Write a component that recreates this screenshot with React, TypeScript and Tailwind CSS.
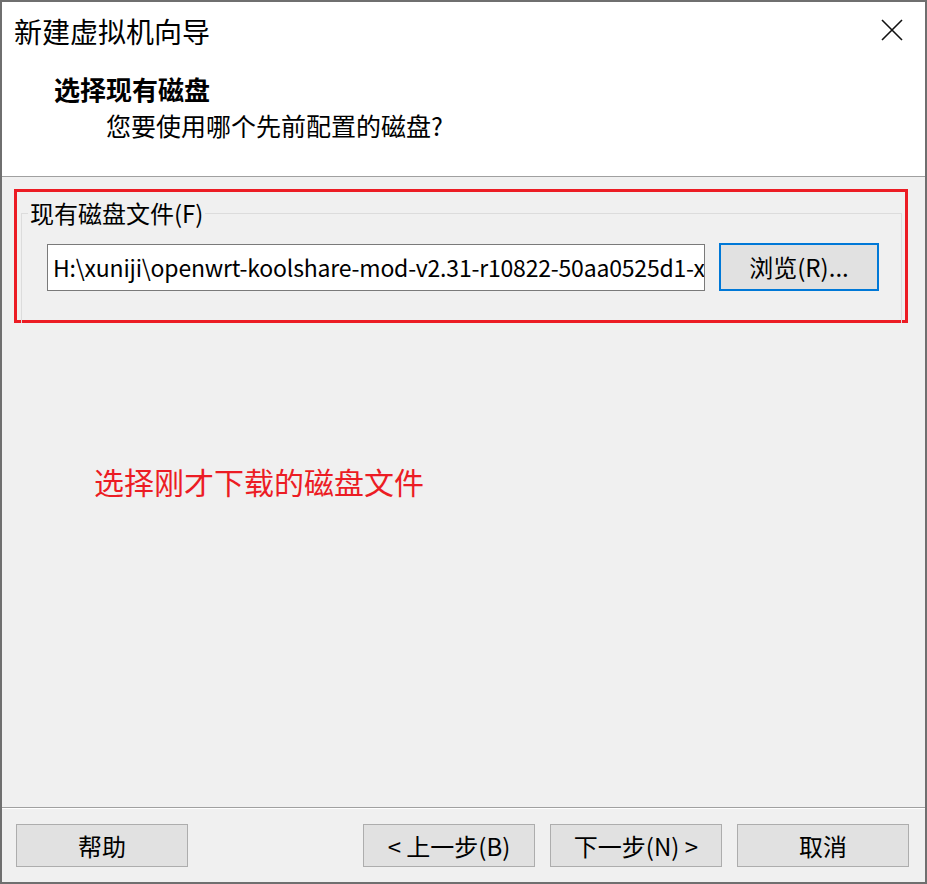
import React from 'react';

const font = { fontFamily: '"Noto Sans CJK SC", "Noto Sans", sans-serif' };

const WizardButton = ({ label }: { label: string }) => (
  <button className="h-[43px] w-[172px] bg-[#e1e1e1] border border-[#adadad] text-[24px] leading-none text-black">
    {label}
  </button>
);

export default function App() {
  const path = 'H:\\xuniji\\openwrt-koolshare-mod-v2.31-r10822-50aa0525d1-x86-64-combined-squashfs.vmdk';

  return (
    <div style={font} className="w-[927px] h-[884px] flex flex-col bg-[#f0f0f0] border-2 border-[#6f6f6f] text-black overflow-hidden">
      {/* header */}
      <div className="h-[175px] shrink-0 bg-white border-b border-[#a0a0a0] flex flex-col">
        <div className="h-[58px] flex items-center justify-between pl-[12px] pr-[22px]">
          <span className="text-[28px] leading-none">新建虚拟机向导</span>
          <svg width="22" height="22" viewBox="0 0 22 22" className="mt-[-2px]">
            <path d="M1 1 L21 21 M21 1 L1 21" stroke="#111" strokeWidth="1.6" fill="none" />
          </svg>
        </div>
        <div className="mt-[12px] pl-[52px] text-[26px] font-bold leading-[34px]">选择现有磁盘</div>
        <div className="mt-[2px] pl-[104px] text-[25px] leading-[34px]">您要使用哪个先前配置的磁盘?</div>
      </div>

      {/* body */}
      <div className="flex-1 flex flex-col">
        <div className="mt-[12px] ml-[12px] w-[894px] h-[134px] border-[3px] border-[#ec1c24] pt-[7px]">
          <fieldset className="ml-[4px] mr-[3px] h-[124px] border border-b-0 border-[#dcdcdc]">
            <legend className="ml-[6px] px-[2px] text-[24px] leading-[28px]">现有磁盘文件(F)</legend>
            <div className="mt-[16px] pl-[25px] flex items-center gap-[14px]">
              <div className="w-[658px] h-[47px] shrink-0 bg-white border border-[#7a7a7a] overflow-hidden whitespace-nowrap flex items-center pl-[5px] text-[23px] tracking-[-0.2px]">
                {path}
              </div>
              <button className="w-[160px] h-[48px] shrink-0 bg-[#e1e1e1] border-2 border-[#0078d7] text-[24px] leading-none">
                浏览(R)...
              </button>
            </div>
          </fieldset>
        </div>
        <div className="mt-[140px] ml-[92px] text-[30px] leading-[36px] text-[#ec1c24]">选择刚才下载的磁盘文件</div>
      </div>

      {/* footer */}
      <div className="shrink-0">
        <div className="h-px bg-[#a0a0a0]" />
        <div className="h-px bg-white" />
        <div className="flex items-center justify-between pl-[14px] pr-[16px] pt-[15px] pb-[15px]">
          <WizardButton label="帮助" />
          <div className="flex gap-[15px]">
            <WizardButton label="< 上一步(B)" />
            <WizardButton label="下一步(N) >" />
            <WizardButton label="取消" />
          </div>
        </div>
      </div>
    </div>
  );
}
